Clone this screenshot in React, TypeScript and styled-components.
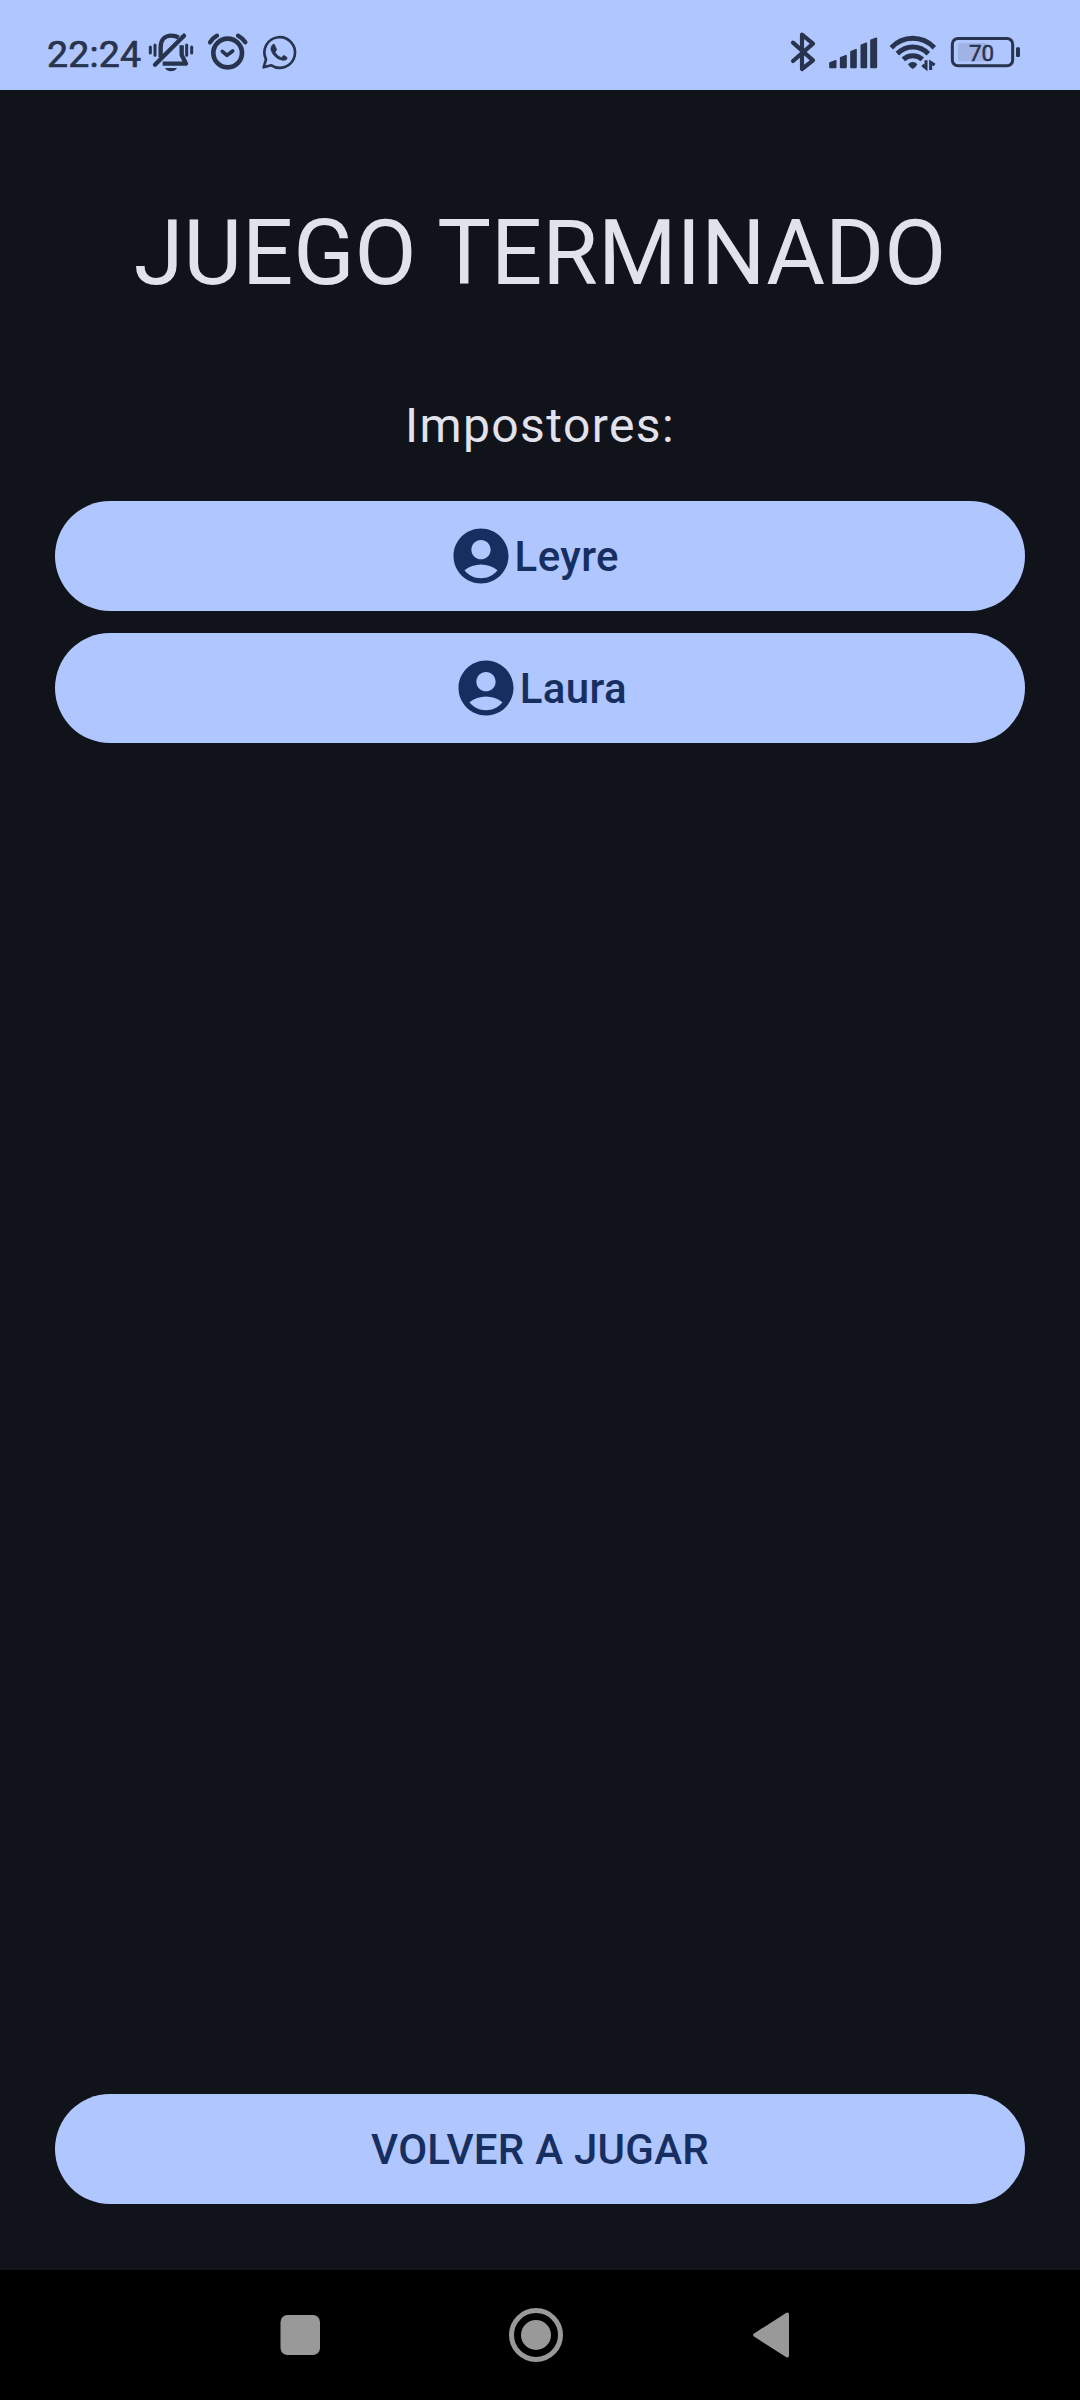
import React from "react";
import styled, { createGlobalStyle } from "styled-components";

const INK = "#28334d";
const PRIMARY = "#b0c6ff";
const ON_PRIMARY = "#172e60";

const Global = createGlobalStyle`
  body { margin: 0; background: #11131a; }
  * { box-sizing: border-box; }
`;

const Screen = styled.div`
  width: 1080px;
  height: 2400px;
  display: flex;
  flex-direction: column;
  background: #11131a;
  color: #e2e2ec;
  font-family: Roboto, "Noto Sans", sans-serif;
`;

const StatusBar = styled.header`
  height: 90px;
  flex: none;
  display: flex;
  justify-content: space-between;
  padding: 30px 59px 10px 47px;
  background: ${PRIMARY};
  color: ${INK};
`;

const StatusGroup = styled.div`
  display: flex;
  align-items: flex-start;
`;

const Clock = styled.span`
  width: 100px;
  font-size: 37.5px;
  font-weight: 400;
  line-height: 48px;
  letter-spacing: 0.15px;
  white-space: nowrap;
  -webkit-text-stroke: 0.7px ${INK};
`;

const Glyph = styled.svg<{ $before?: number }>`
  display: block;
  flex: none;
  height: 50px;
  margin-left: ${(p) => p.$before ?? 0}px;
`;

const BatteryText = styled.text`
  font: 400 67px Roboto, sans-serif;
`;

const Main = styled.main`
  flex: 1;
  display: flex;
  flex-direction: column;
  padding: 110px 55px 66px;
`;

const Title = styled.h1`
  margin: 0;
  font-size: 90.2px;
  font-weight: 400;
  line-height: 107px;
  text-align: center;
  white-space: nowrap;
`;

const Subtitle = styled.p`
  margin: 83px 0 39px;
  font-size: 48px;
  line-height: 72px;
  letter-spacing: 1.4px;
  text-align: center;
`;

const List = styled.div`
  display: flex;
  flex-direction: column;
  gap: 22px;
`;

const Pill = styled.button`
  height: 110px;
  width: 100%;
  border: 0;
  border-radius: 55px;
  display: flex;
  align-items: center;
  justify-content: center;
  background: ${PRIMARY};
  color: ${ON_PRIMARY};
  font: 500 42px / 60px Roboto, "Noto Sans", sans-serif;
  letter-spacing: 0.25px;
`;

const Label = styled.span`
  padding-top: 2px;
  white-space: pre;
`;

const PlayerName = styled(Label)`
  margin-left: 0.8px;
  letter-spacing: 0.4px;
  word-spacing: 2.4px;
`;

const Spacer = styled.div`
  flex: 1;
`;

const NavBar = styled.nav`
  height: 130px;
  flex: none;
  display: flex;
  align-items: center;
  padding-left: 270px;
  background: #000;
`;

const NavIcon = styled.svg`
  width: 60px;
  height: 60px;
  margin-right: 176px;
  fill: #999;
`;

const Account = () => (
  <svg width="66" height="66" viewBox="0 0 24 24" fill="currentColor">
    <path d="M12 2C6.48 2 2 6.48 2 12s4.48 10 10 10 10-4.48 10-10S17.52 2 12 2zm0 4.2c1.93 0 3.5 1.57 3.5 3.5s-1.57 3.5-3.5 3.5-3.5-1.57-3.5-3.5S10.07 6.2 12 6.2zM12 20.1c-2.3 0-4.4-.9-6-2.9 1.7-1.35 3.75-2.1 6-2.1s4.3.75 6 2.1c-1.6 2-3.7 2.9-6 2.9z" />
  </svg>
);

const Muted = () => (
  <Glyph width="50" viewBox="351 90 150 150" fill="none" stroke={INK} strokeWidth="9">
    <path d="M392 172V141C392 119 405 107 424 107C433 107 440 109 446 113" strokeWidth="13" />
    <path d="M455 136V165L468 191H398" strokeWidth="13" strokeLinejoin="round" />
    <path d="M375 194L462 107" strokeWidth="13" strokeLinecap="round" />
    <path d="M361 141V159M375 135V166M470 135V166M485 141V159" strokeLinecap="round" />
    <path d="M405 204H441Q435 214 423 214Q411 214 405 204Z" fill={INK} stroke="none" />
  </Glyph>
);

const Alarm = () => (
  <Glyph $before={6} width="50" viewBox="519 90 150 150" fill="none" stroke={INK} strokeLinecap="round">
    <circle cx="593" cy="159" r="43" strokeWidth="14" />
    <path d="M577 154L591 166L608 153" strokeWidth="11" strokeLinejoin="round" />
    <path d="M540 127Q548 114 561 107M624 107Q637 114 646 127" strokeWidth="13" />
  </Glyph>
);

const Chat = () => (
  <Glyph $before={1} width="50" viewBox="673 90 150 150" fill="none" stroke={INK} strokeWidth="8">
    <path d="M702 202L709 178A46 46 0 1 1 725 196Z" strokeLinejoin="round" />
    <path d="M734 133L741 149L736 157Q743 169 755 173L762 166L772 172Q774 182 759 181Q742 178 731 164Q717 144 730 133Z" fill={INK} stroke={INK} strokeWidth="2" strokeLinejoin="round" />
  </Glyph>
);

const Bluetooth = () => (
  <Glyph width="32" viewBox="54 90 96 150" fill="none" stroke={INK} strokeWidth="12.5" strokeLinecap="round" strokeLinejoin="round">
    <path d="M69 128L129 181L96 207V104L129 131L69 183" />
  </Glyph>
);

const Signal = () => (
  <Glyph $before={6} width="54" viewBox="168 90 162 150" fill={INK} stroke={INK} strokeWidth="5" strokeLinejoin="round">
    <path d="M180 202V189L197 182V202ZM212 202V173L228 167V202ZM243 202V155L258 149V202ZM274 202V136L289 130V202ZM303 202V121L319 115V202Z" />
  </Glyph>
);

const Wifi = () => (
  <Glyph $before={8} width="50" viewBox="354 90 150 150" fill="none" stroke={INK} strokeWidth="15">
    <path d="M364 143Q391 115 428 115Q466 115 493 143" />
    <path d="M382 161Q403 141 428 141Q455 141 475 161" />
    <path d="M400 178Q412 167 428 167Q445 167 457 178" />
    <path d="M414 193Q420 186 428 186Q437 186 442 193Q438 203 428 207Q419 203 414 193Z" fill={INK} stroke="none" />
    <path d="M468 181V204L457 195M482 210V187L494 195" strokeWidth="9" />
  </Glyph>
);

const Battery = () => (
  <Glyph $before={11} width="72" viewBox="537 90 216 150" fill="none">
    <rect x="564" y="129" width="86" height="55" rx="5" fill="#a0b2e6" />
    <rect x="547" y="115.5" width="181" height="82" rx="17" stroke={INK} strokeWidth="9" />
    <rect x="738" y="142" width="12" height="29" rx="4" fill={INK} />
    <BatteryText x="597" y="183" fill={INK} stroke={INK} strokeWidth="1.5">70</BatteryText>
  </Glyph>
);

export default function App() {
  return (
    <Screen>
      <Global />
      <StatusBar>
        <StatusGroup>
          <Clock>22:24</Clock>
          <Muted />
          <Alarm />
          <Chat />
        </StatusGroup>
        <StatusGroup>
          <Bluetooth />
          <Signal />
          <Wifi />
          <Battery />
        </StatusGroup>
      </StatusBar>
      <Main>
        <Title>JUEGO TERMINADO</Title>
        <Subtitle>Impostores:</Subtitle>
        <List>
          {["Leyre ", "Laura"].map((name) => (
            <Pill key={name}>
              <Account />
              <PlayerName>{name}</PlayerName>
            </Pill>
          ))}
        </List>
        <Spacer />
        <Pill>
          <Label>VOLVER A JUGAR</Label>
        </Pill>
      </Main>
      <NavBar>
        <NavIcon viewBox="270 2305 60 60">
          <rect x="280.5" y="2315" width="39.5" height="40" rx="7" />
        </NavIcon>
        <NavIcon viewBox="506 2305 60 60">
          <circle cx="536" cy="2335" r="24.5" fill="none" stroke="#999" strokeWidth="5" />
          <circle cx="536" cy="2335" r="15" />
        </NavIcon>
        <NavIcon viewBox="742 2305 60 60">
          <path d="M754 2333.5L786 2313Q789 2311.5 789 2314.5V2355.5Q789 2358.5 786 2357L754 2336.500Q752 2335 754 2333.5Z" />
        </NavIcon>
      </NavBar>
    </Screen>
  );
}
